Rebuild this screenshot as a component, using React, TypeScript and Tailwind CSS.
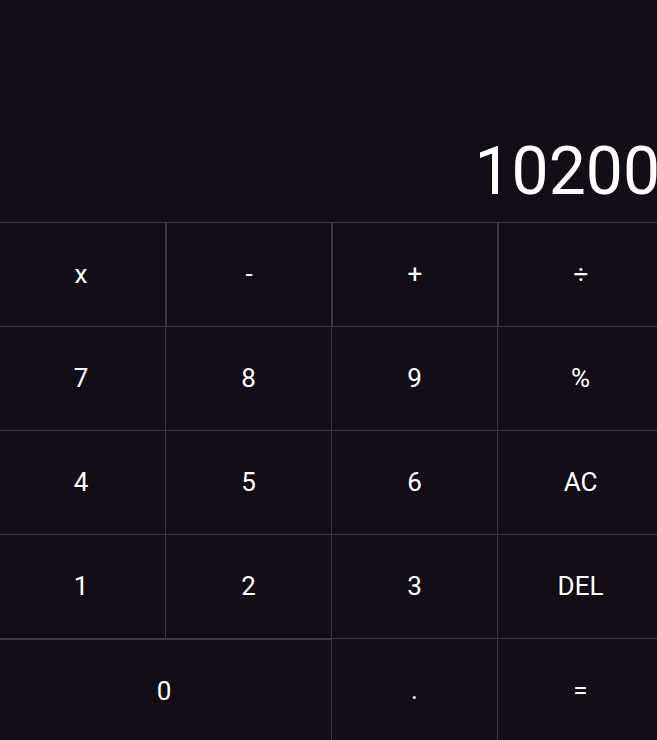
import React, { useState } from "react";

const rows = [
  ["x", "-", "+", "÷"],
  ["7", "8", "9", "%"],
  ["4", "5", "6", "AC"],
  ["1", "2", "3", "DEL"],
];

export default function App() {
  const [display] = useState("10200");

  return (
    <div
      className="h-screen w-screen overflow-hidden bg-[#120d17] text-white"
      style={{ fontFamily: "Roboto, 'Liberation Sans', sans-serif" }}
    >
      <div className="w-[663px]">
        {/* Display */}
        <div className="h-[222px] flex items-end justify-end pb-[17px] pr-[3px]">
          <span className="text-[66px] leading-none whitespace-nowrap">
            {display}
          </span>
        </div>

        {/* Keypad */}
        <div className="bg-[#3a3a3a] pt-px flex flex-col gap-px">
          {rows.map((row, r) => (
            <div key={r} className="grid grid-cols-[165px_165px_165px_165px] gap-px">
              {row.map((key, c) => (
                <button
                  key={key}
                  className={`h-[103px] bg-[#120d17] text-[26px] text-white flex items-center justify-center ${
                    c === 0 ? "pr-[3px]" : ""
                  } ${r === 0 && c > 0 ? "border-l border-[#3a3a3a]" : ""}`}
                >
                  {key}
                </button>
              ))}
            </div>
          ))}
          <div className="grid grid-cols-[165px_165px_165px_165px] gap-px">
            <button className="col-span-2 h-[103px] bg-[#120d17] text-[26px] border-t border-[#3a3a3a] flex items-center justify-center pr-[3px]">
              0
            </button>
            <button className="h-[103px] bg-[#120d17] text-[26px] flex items-center justify-center">
              .
            </button>
            <button className="h-[103px] bg-[#120d17] text-[26px] flex items-center justify-center">
              =
            </button>
          </div>
        </div>
      </div>
    </div>
  );
}
